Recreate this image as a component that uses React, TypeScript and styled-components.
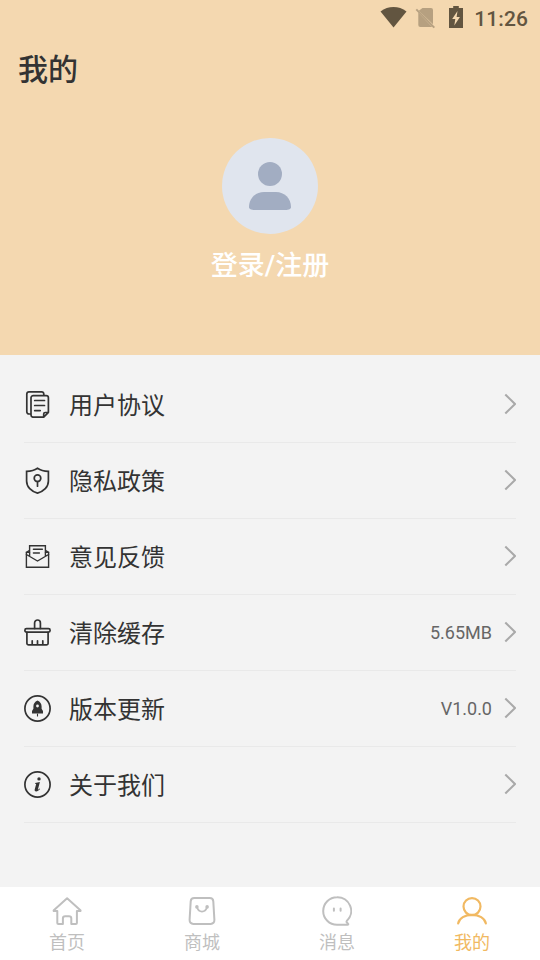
import type { ReactNode } from "react";
import styled, { createGlobalStyle } from "styled-components";

const GlobalStyle = createGlobalStyle`
  * {
    box-sizing: border-box;
  }
  body {
    margin: 0;
    font-family: Roboto, "Noto Sans CJK SC", sans-serif;
    color: #333;
  }
`;

const Screen = styled.div`
  display: flex;
  flex-direction: column;
  width: 100%;
  height: 100vh;
  overflow: hidden;
  background-color: #f3f3f3;
`;

const Header = styled.header`
  display: flex;
  flex-direction: column;
  height: 355px;
  flex-shrink: 0;
  background-color: #f4d8b0;
`;

const StatusBar = styled.div`
  display: flex;
  justify-content: flex-end;
  align-items: center;
  height: 36px;
  padding-right: 12px;
  color: #625540;
`;

const Clock = styled.span`
  margin-left: 10px;
  padding-top: 1px;
  font-size: 21px;
  font-weight: 500;
  letter-spacing: 0.1px;
  line-height: 24px;
`;

const Title = styled.h1`
  margin: 12px 0 0 18px;
  font-size: 30px;
  font-weight: 500;
  line-height: 44px;
`;

const Profile = styled.div`
  display: flex;
  flex-direction: column;
  align-items: center;
  margin-top: 46px;
`;

const Avatar = styled.div`
  display: flex;
  width: 96px;
  height: 96px;
  border-radius: 50%;
  background-color: #e0e5ee;
`;

const Login = styled.span`
  margin-top: 12px;
  color: white;
  font-size: 27px;
  font-weight: 500;
  line-height: 40px;
`;

const Menu = styled.ul`
  flex: 1;
  margin: 0;
  padding: 12px 24px 0;
  list-style: none;
`;

const MenuItem = styled.li`
  display: flex;
  align-items: center;
  height: 76px;
  border-bottom: 1px solid #e9e9e9;
`;

const MenuIcon = styled.svg`
  width: 27px;
  height: 27px;
  fill: none;
  stroke: #333;
  stroke-width: 1.7;
  stroke-linecap: round;
  stroke-linejoin: round;
`;

const Label = styled.span`
  flex: 1;
  margin-left: 18px;
  padding-top: 2px;
  font-size: 24px;
  line-height: 36px;
`;

const Value = styled.span`
  margin-right: 12px;
  padding-bottom: 1px;
  color: #666;
  font-size: 18px;
`;

const Arrow = styled.svg`
  width: 12px;
  height: 22px;
  margin-bottom: 1px;
  fill: none;
  stroke: #a9a9a9;
  stroke-width: 2.1;
`;

const TabBar = styled.nav`
  display: grid;
  grid-template-columns: repeat(4, 1fr);
  height: 73px;
  flex-shrink: 0;
  background-color: white;
`;

const Tab = styled.div<{ $active: boolean }>`
  display: flex;
  flex-direction: column;
  align-items: center;
  padding: 9px 1px 0 0;
  color: ${(props) => (props.$active ? "#f1b962" : "#bfbfbf")};
  font-size: 18px;
  line-height: 26px;
`;

const TabIcon = styled.svg`
  width: 30px;
  height: 30px;
  margin-bottom: 4px;
  fill: none;
  stroke: currentColor;
  stroke-width: 2;
  stroke-linecap: round;
  stroke-linejoin: round;
`;

interface Item {
  label: string;
  value?: string;
  icon: ReactNode;
}

const items: Item[] = [
  {
    label: "用户协议",
    icon: (
      <>
        <path d="M6.5 23H5a2.2 2.2 0 0 1-2.2-2.2V3A2.2 2.2 0 0 1 5 .9h12.6A2.2 2.2 0 0 1 19.8 3v1" />
        <path d="M19.7 26.2H9.2A2.2 2.2 0 0 1 7 24V6.8a2.2 2.2 0 0 1 2.2-2.2h13a2.2 2.2 0 0 1 2.2 2.2v14.5l-4.7 4.9zM19.7 26v-3a1.5 1.5 0 0 1 1.5-1.5h3" />
        <path d="M10.7 9.5h9.8M10.7 14.5h9.8M10.7 19.6h5.5" />
      </>
    ),
  },
  {
    label: "隐私政策",
    icon: (
      <>
        <path
          strokeLinejoin="miter"
          d="M13.5 1.3C10.8 3.2 6.8 4.3 2.6 4.4V14c0 6 4.7 10.5 10.9 12.1C19.7 24.5 24.4 20 24.4 14V4.4C20.2 4.3 16.2 3.2 13.5 1.3z"
        />
        <circle cx="13.5" cy="11.2" r="3.3" />
        <path d="M13.5 14.500v4.700" />
      </>
    ),
  },
  {
    label: "意见反馈",
    icon: (
      <g strokeWidth="1.4" strokeLinejoin="miter">
        <path d="M5.5 9.4H2.4v14.9h22.2V9.4h-3.1" />
        <path d="M2.4 11.5l11.1 6.5 11.100-6.500M5.600 13V2.700h15.800V13M2.500 9.400l2.700-1.700M24.500 9.400l-2.700-1.700" />
        <path d="M9.4 6.3h9M9.4 10h6" />
      </g>
    ),
  },
  {
    label: "清除缓存",
    value: "5.65MB",
    icon: (
      <>
        <path d="M10.6 9.5V3.9a2.9 2.9 0 0 1 5.8 0v5.6" />
        <rect x=".9" y="9.6" width="25.2" height="3.6" rx="1.6" />
        <path d="M2.9 13.3v10.9a1.7 1.7 0 0 0 1.7 1.7h17.8a1.7 1.7 0 0 0 1.7-1.7V13.3M8.2 21.8v3.5M13.5 21.8v3.5M18.8 21.8v3.5" />
      </>
    ),
  },
  {
    label: "版本更新",
    value: "V1.0.0",
    icon: (
      <>
        <circle cx="13.5" cy="13.5" r="12.6" />
        <path
          fill="#333"
          stroke="none"
          fillRule="evenodd"
          d="M13.5 5.5c-2.7 1.2-4.1 3.3-4.1 6v2.2L8 16v2.6h11V16l-1.400-2.300v-2.200c0-2.700-1.400-4.800-4.100-6zm0 4.100a1.400 1.400 0 1 1 0 2.800 1.400 1.400 0 0 1 0-2.800z"
        />
        <path strokeWidth="1.1" d="M13.5 19v2" />
      </>
    ),
  },
  {
    label: "关于我们",
    icon: (
      <>
        <circle cx="13.5" cy="13.5" r="12.6" />
        <circle cx="15" cy="7.9" r="1.7" fill="#333" stroke="none" />
        <path
          fill="#333"
          stroke="none"
          d="M11.1 12l4.800-.9-2 7.300c-.1.500.5.300 1.800-.8l.4.500c-1.400 1.700-2.600 2.300-3.900 2.300-1.400 0-1.800-.7-1.500-1.800l1.400-5.300c.1-.4-.3-.6-1-.6z"
        />
      </>
    ),
  },
];

const tabs = [
  {
    label: "首页",
    icon: (
      <path d="M15.1 2.3l13.300 12c.4.400.2.800-.3.800h-3.200v11.800c0 .7-.4 1.100-1.100 1.100h-4.500v-5.500a2.300 2.300 0 0 0-2.300-2.300h-3.800a2.300 2.300 0 0 0-2.300 2.300V28H6.400c-.7 0-1.100-.4-1.100-1.100V15.100H2.100c-.5 0-.7-.4-.3-.8z" />
    ),
  },
  {
    label: "商城",
    icon: (
      <>
        <path d="M7.3 2.1h15.400a3.600 3.600 0 0 1 3.600 3.300l1.100 18.500c.1 2.400-1.400 4-3.700 4H6.300c-2.300 0-3.800-1.600-3.700-4L3.700 5.400a3.600 3.600 0 0 1 3.600-3.300z" />
        <path d="M10 11.3c.9 2.8 2.6 4.3 5 4.3s4.100-1.500 5-4.300" strokeWidth="1.7" />
        <circle cx="9.9" cy="10.9" r="1.8" fill="currentColor" stroke="none" />
        <circle cx="20.1" cy="10.9" r="1.8" fill="currentColor" stroke="none" />
      </>
    ),
  },
  {
    label: "消息",
    icon: (
      <>
        <path d="M15 1.2a13.8 13.8 0 0 0 0 27.600h10.500c.8 0 1-.6.500-1.100l-1.200-1.400c-.4-.5-.3-1 .1-1.500A13.700 13.700 0 0 0 15 1.200z" />
        <path d="M11.9 12.4v2.300M18.600 12.400v2.300" />
      </>
    ),
  },
  {
    label: "我的",
    icon: (
      <g strokeWidth="2.2">
        <circle cx="15" cy="10.600" r="8.500" />
        <path d="M1.2 27.300c1-5.200 6.800-8.400 13.800-8.400s12.800 3.200 13.800 8.400" />
      </g>
    ),
  },
];

function StatusIcons() {
  return (
    <svg width="84" height="26" viewBox="380 5 84 26" fill="currentColor">
      <path d="M380.5 11.4c7.700-5.800 18.300-5.800 26 0L393.500 27.500z" />
      <g opacity=".42">
        <path d="M422.500 8h8.500q2 0 2 2v14.300L418.800 10.800zM418.300 12.600L432.200 27H420.300q-2 0-2-2z" />
        <path d="M416.300 9.300L434.300 27.700" stroke="currentColor" strokeWidth="1.900" />
      </g>
      <path
        fillRule="evenodd"
        d="M453.2 6h5.600v2h4.200v20h-14V8h4.200zM457.500 11l-5.300 8h3.100l-1 6.500 5.600-8.500h-3.300z"
      />
    </svg>
  );
}

function App() {
  return (
    <Screen>
      <GlobalStyle />
      <Header>
        <StatusBar>
          <StatusIcons />
          <Clock>11:26</Clock>
        </StatusBar>
        <Title>我的</Title>
        <Profile>
          <Avatar>
            <svg viewBox="0 0 96 96" fill="#a2adc2">
              <circle cx="48" cy="36" r="12" />
              <path d="M27 69c0-8.500 6.500-15 15-15h12c8.500 0 15 6.500 15 15 0 2-1.800 3-6 3H33c-4.200 0-6-1-6-3z" />
            </svg>
          </Avatar>
          <Login>登录/注册</Login>
        </Profile>
      </Header>
      <Menu>
        {items.map((item) => (
          <MenuItem key={item.label}>
            <MenuIcon viewBox="0 0 27 27">{item.icon}</MenuIcon>
            <Label>{item.label}</Label>
            {item.value ? <Value>{item.value}</Value> : null}
            <Arrow viewBox="0 0 12 22">
              <path d="M1.3 1.5l9.700 9.500-9.700 9.500" />
            </Arrow>
          </MenuItem>
        ))}
      </Menu>
      <TabBar>
        {tabs.map((tab) => (
          <Tab key={tab.label} $active={tab.label === "我的"}>
            <TabIcon viewBox="0 0 30 30">{tab.icon}</TabIcon>
            {tab.label}
          </Tab>
        ))}
      </TabBar>
    </Screen>
  );
}

export default App;
